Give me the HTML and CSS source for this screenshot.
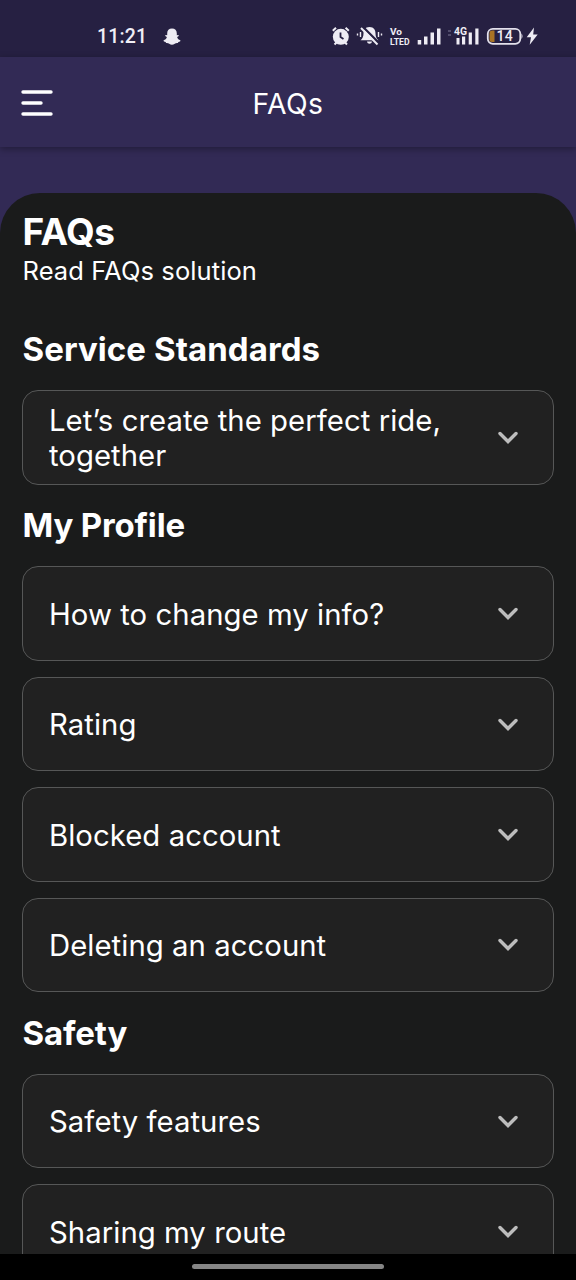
FILE: index.html
```html
<!DOCTYPE html>
<html lang="en">
<head>
<meta charset="utf-8">
<title>FAQs</title>
<link rel="stylesheet" href="styles.css">
</head>
<body>
<svg class="defs" width="0" height="0"><symbol id="chevron" viewBox="0 0 22 15"><path d="M3 3.500 11 11.500 19 3.500"/></symbol></svg>
<div class="screen">
  <div class="status">
    <span class="time">11:21</span>
    <svg class="ghost" width="18" height="18" viewBox="0 0 18 18"><path d="M9 .5c3 0 4.800 2 4.800 4.700v2l1.400-.2c.9.1.7 1-.1 1.400l-1 .6c.5 1.800 1.700 2.800 3.400 3.400.2 1-1 1.200-2.100 1.500l-.5 1.200c-1-.1-2.200-.1-3.100.6-1.900 1.500-3.800 1.500-5.600 0-.9-.7-2.100-.7-3.100-.6L2.600 13.900C1.500 13.600.3 13.400.5 12.400 2.200 11.800 3.400 10.800 3.900 9l-1-.6C2.100 8 1.900 7.100 2.800 7l1.400.2v-2C4.200 2.500 6 .5 9 .5z"/></svg>
    <svg class="tray" width="210" height="24" viewBox="0 0 210 24">
      <circle cx="10.800" cy="12.800" r="8"/>
      <path class="line" d="M2.800 6.700 6 3.700M18.800 6.700l-3.200-3M4.500 20.500l2-2M17 20.500l-2-2"/>
      <path class="cut" d="M10.500 8.500V13l3 2"/>
      <path d="M39.500 3c-4.500 0-6 3-6 6.500 0 3-.8 5-3 6.800h18c-2.200-1.800-3-3.800-3-6.800 0-3.500-1.500-6.500-6-6.500zM37 17.500h5c-.4 3-4.600 3-5 0z"/>
      <path class="gap" d="M33 3 49 19"/><path class="line" d="M31 4 47.500 20.500"/>
      <path class="thin" d="M30.500 8v5M27.500 9.500v2M48.500 8v5M51.500 9.500v2"/>
      <text class="volte" x="60" y="11" textLength="12" lengthAdjust="spacingAndGlyphs">Vo</text>
      <text class="volte" x="60" y="21" textLength="19.500" lengthAdjust="spacingAndGlyphs">LTED</text>
      <path d="M87.700 16h3.500v4.500h-3.500zM94 12.500h3.500v8H94zM100.500 8.500h3.500v12h-3.500zM107 4.500h3.500v16H107z"/>
      <path class="faint" d="M118 7h3M118 11h3"/>
      <text class="net" x="124" y="11" textLength="13" lengthAdjust="spacingAndGlyphs">4G</text>
      <path d="M126.500 14h3v6.500h-3zM132 12.500h3.200v8H132zM138.700 8.500h3.200v12h-3.200zM145.300 4.500h3.200v16h-3.200z"/>
      <rect class="cell" x="157.800" y="4.800" width="32.500" height="15" rx="5"/>
      <path class="charge" d="M164.500 6.500v11.600h-2.500q-2.500 0-2.500-2.500V9q0-2.500 2.500-2.500z"/>
      <path d="M191.500 9.500q2 2.700 0 5.500z"/>
      <text class="level" x="174.800" y="17.300" text-anchor="middle">14</text>
      <path d="M204 3.500 196.700 13.300h4.300l-1.300 7.500 8-10.300h-4.500z"/>
    </svg>
  </div>
  <header class="appbar">
    <svg class="menu" width="32" height="28" viewBox="0 0 32 28"><path d="M2 3h28M2 14h18M2 25h28"/></svg>
    <span class="title">FAQs</span>
  </header>
  <main class="panel">
    <h1>FAQs</h1>
    <p class="sub">Read FAQs solution</p>
    <h2>Service Standards</h2>
    <div class="list">
      <div class="card"><span>Let’s create the perfect ride, together</span><svg class="chev"><use href="#chevron"/></svg></div>
    </div>
    <h2 class="tight">My Profile</h2>
    <div class="list">
      <div class="card"><span>How to change my info?</span><svg class="chev"><use href="#chevron"/></svg></div>
      <div class="card"><span>Rating</span><svg class="chev"><use href="#chevron"/></svg></div>
      <div class="card"><span>Blocked account</span><svg class="chev"><use href="#chevron"/></svg></div>
      <div class="card"><span>Deleting an account</span><svg class="chev"><use href="#chevron"/></svg></div>
    </div>
    <h2 class="tight">Safety</h2>
    <div class="list">
      <div class="card"><span>Safety features</span><svg class="chev"><use href="#chevron"/></svg></div>
      <div class="card"><span>Sharing my route</span><svg class="chev"><use href="#chevron"/></svg></div>
    </div>
  </main>
  <footer class="nav"><div class="pill"></div></footer>
</div>
</body>
</html>
```
FILE: styles.css
```css
* { box-sizing: border-box; }
body { margin: 0; background: #322a55; color: #fff; font-family: Inter, "Liberation Sans", sans-serif; }
.defs { display: block; }
.screen { width: 576px; height: 1280px; display: flex; flex-direction: column; overflow: hidden; }
.status { flex: none; height: 57px; background: #262042; display: flex; align-items: center; padding: 16px 0 0 97px; fill: #eeecf4; }
.time { font: 500 19.5px/24px Roboto, sans-serif; letter-spacing: .15px; width: 66px; color: #f0eef6; }
.tray { margin-left: 149px; margin-top: -1px; }
.line, .thin { fill: none; stroke: #eeecf4; stroke-width: 2; }
.thin { stroke-width: 1.4; }
.cut { fill: none; stroke: #262042; stroke-width: 1.8; }
.gap { fill: none; stroke: #262042; stroke-width: 2.4; }
.faint { stroke: #625c7c; stroke-width: 1.5; }
.volte { font: 700 8.5px/1 Roboto, sans-serif; }
.net { font: 700 11px Roboto, sans-serif; }
.level { font: 500 14px Roboto, sans-serif; letter-spacing: .4px; }
.cell { fill: none; stroke: #e4e1ec; stroke-width: 1.8; }
.charge { fill: #a87425; }
.appbar { flex: none; height: 90px; display: grid; grid-template-columns: 53px 1fr 53px; align-items: center; padding-top: 2px; box-shadow: 0 2px 7px rgba(0,0,0,.34); background: #322a55; }
.menu { margin: -1px 0 0 21px; fill: none; stroke: #fff; stroke-width: 3.4; stroke-linecap: round; }
.title { text-align: center; font-size: 28.3px; letter-spacing: .4px; padding-top: 1px; }
.panel { flex: 1; min-height: 0; overflow: hidden; margin-top: 46px; background: #1a1b1b; border-radius: 40px 40px 0 0; padding: 16px 22px 0; }
h1, h2, p { margin: 0; }
h1 { font-size: 37px; line-height: 46px; font-weight: 700; letter-spacing: -.45px; }
.sub { font-size: 25.5px; line-height: 32px; letter-spacing: .1px; }
h2 { font-size: 33px; line-height: 40px; font-weight: 700; height: 103.200px; padding-top: 42px; letter-spacing: .08px; }
.tight { height: 81.600px; padding-top: 20.400px; letter-spacing: -.15px; }
h1, .sub, h2 { padding-left: .5px; }
.list { display: grid; gap: 15.800px; }
.card { height: 94.600px; border: 1px solid #565757; border-radius: 16px; background: #212121; display: flex; align-items: center; justify-content: space-between; padding: 2px 34px 0 26px; font-size: 29.3px; line-height: 35.300px; letter-spacing: .05px; }
.card span { width: 410px; }
.chev { width: 22px; height: 15px; margin-top: -2px; fill: none; stroke: #bdbdbd; stroke-width: 3.4; stroke-linecap: round; }
.nav { flex: none; height: 26px; background: #000; display: flex; justify-content: center; padding-top: 10px; }
.pill { width: 192px; height: 5px; border-radius: 3px; background: #858585; }
```
